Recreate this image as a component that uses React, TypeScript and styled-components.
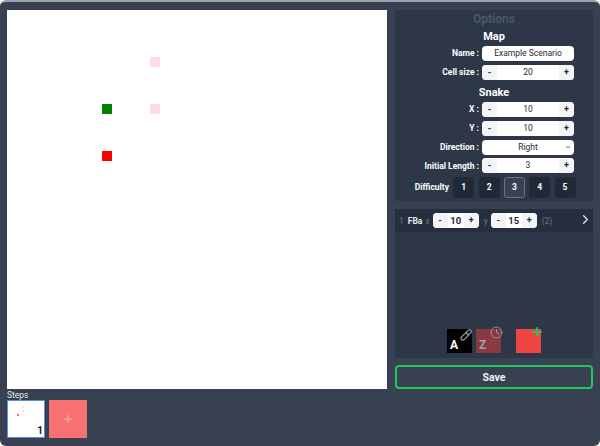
import styled, { createGlobalStyle } from 'styled-components';
import { ChevronRight, Clock, Plus } from 'lucide-react';

const cells = [
  { x: 143, y: 47, color: '#fddde2' },
  { x: 95, y: 94, color: 'green' },
  { x: 143, y: 94, color: '#fddde2' },
  { x: 95, y: 141, color: 'red' },
];

const Global = createGlobalStyle`
  html, body { margin: 0; padding: 0; background: #fff; }
  * { box-sizing: border-box; }
  body { font-family: Roboto, "Open Sans", sans-serif; }
`;

const Frame = styled.div`
  width: 600px;
  height: 446px;
  background: #374151;
  border-top: 2px solid #9ca3af;
  border-radius: 6px;
  padding: 8px 7px 0 7px;
  display: flex;
  flex-direction: column;
  overflow: hidden;
`;

const Main = styled.div`
  display: flex;
  gap: 8px;
  height: 379px;
`;

const Canvas = styled.div`
  position: relative;
  width: 380px;
  height: 379px;
  background: #fff;
`;

const Cell = styled.div`
  position: absolute;
  width: 10px;
  height: 10px;
`;

const Side = styled.div`
  width: 198px;
  display: flex;
  flex-direction: column;
`;

const Options = styled.div`
  height: 191px;
  background: #2d3748;
  display: flex;
  flex-direction: column;
  align-items: center;
  padding-top: 1px;
`;

const Title = styled.div`
  color: #4a5568;
  font-size: 12px;
  font-weight: 700;
  line-height: 17px;
`;

const Section = styled.div<{ $top: number }>`
  color: #fff;
  font-size: 11px;
  font-weight: 700;
  line-height: 15px;
  height: 15px;
  margin-top: ${(p) => p.$top}px;
`;

const Row = styled.div`
  width: 100%;
  height: 18.9px;
  display: flex;
  align-items: center;
  justify-content: flex-end;
  gap: 3px;
  padding-right: 19px;
`;

const Rows = styled.div`
  width: 100%;
  display: flex;
  flex-direction: column;
`;

const Label = styled.label`
  color: #fff;
  font-size: 8.5px;
  font-weight: 700;
  white-space: nowrap;
`;

const TextBox = styled.div`
  width: 92px;
  height: 15px;
  background: #fff;
  border-radius: 4px;
  color: #1f2937;
  font-size: 8.5px;
  line-height: 15px;
  text-align: center;
`;

const Stepper = styled.div<{ $w: number; $bold?: boolean }>`
  width: ${(p) => p.$w}px;
  height: 15px;
  background: #fff;
  border-radius: 4px;
  display: flex;
  overflow: hidden;
  color: #1f2937;
  font-size: ${(p) => (p.$bold ? 9.5 : 8.5)}px;
  font-weight: ${(p) => (p.$bold ? 700 : 400)};
  line-height: 15px;
`;

const StepBtn = styled.span`
  width: 15px;
  background: #f3f4f6;
  text-align: center;
  font-weight: 700;
  font-size: 9px;
`;

const StepValue = styled.span`
  flex: 1;
  text-align: center;
`;

const SelectBox = styled(TextBox)`
  position: relative;
`;

const Caret = styled.svg`
  position: absolute;
  right: 3px;
  top: 5px;
  width: 6px;
  height: 4px;
`;

const DiffRow = styled.div`
  width: 100%;
  height: 22px;
  margin-top: 1px;
  display: flex;
  align-items: center;
  justify-content: flex-end;
  gap: 4.3px;
  padding-right: 17.5px;
`;

const DiffBtn = styled.div<{ $active?: boolean }>`
  width: 21px;
  height: 21px;
  border-radius: 3px;
  background: ${(p) => (p.$active ? '#374151' : '#1f2937')};
  border: 1px solid ${(p) => (p.$active ? '#6b7280' : '#1f2937')};
  color: #fff;
  font-size: 8.5px;
  font-weight: 700;
  display: flex;
  align-items: center;
  justify-content: center;
`;

const Layers = styled.div`
  margin-top: 8px;
  height: 149px;
  background: #2d3748;
  display: flex;
  flex-direction: column;
`;

const LayerRow = styled.div`
  height: 23px;
  background: #262f3f;
  display: flex;
  align-items: center;
  padding-left: 4px;
  font-size: 8.5px;
  color: #6b7280;
  position: relative;
`;

const LayerName = styled.span`
  color: #e5e7eb;
  font-weight: 700;
  margin: 0 3px 0 4px;
`;

const Axis = styled.span<{ $ml?: number }>`
  margin-left: ${(p) => p.$ml || 0}px;
  margin-right: 3px;
  color: #6b7280;
`;

const Count = styled.span`
  margin-left: 5px;
  color: #6b7280;
`;

const Arrow = styled(ChevronRight)`
  position: absolute;
  right: 0;
  top: 3px;
  color: #e5e7eb;
`;

const Swatches = styled.div`
  margin-top: auto;
  margin-bottom: 5px;
  display: flex;
  padding-left: 52px;
`;

const Swatch = styled.div<{ $bg: string; $fg?: string; $mr: number }>`
  position: relative;
  width: 25px;
  height: 24px;
  background: ${(p) => p.$bg};
  color: ${(p) => p.$fg || '#fff'};
  margin-right: ${(p) => p.$mr}px;
  font-size: 12px;
  font-weight: 700;
  display: flex;
  align-items: flex-end;
  padding: 0 0 1px 3px;
  line-height: 13px;
`;

const Badge = styled.span<{ $top: number; $right: number }>`
  position: absolute;
  top: ${(p) => p.$top}px;
  right: ${(p) => p.$right}px;
  display: flex;
`;

const SaveBtn = styled.button`
  margin-top: 7px;
  height: 24px;
  background: transparent;
  border: 2px solid #22c55e;
  border-radius: 4px;
  color: #f3f4f6;
  font-family: inherit;
  font-size: 10.5px;
  font-weight: 700;
  padding: 1px 0 0;
`;

const StepsTitle = styled.div`
  color: #e5e7eb;
  font-size: 8.5px;
  line-height: 10px;
  margin-top: 1px;
`;

const Steps = styled.div`
  display: flex;
  gap: 4px;
`;

const Thumb = styled.div`
  position: relative;
  width: 38px;
  height: 38px;
  background: #fff;
  border: 1px solid #5b8def;
`;

const Dot = styled.div`
  position: absolute;
  width: 2px;
  height: 2px;
`;

const ThumbNum = styled.span`
  position: absolute;
  right: 1px;
  bottom: 0;
  color: #111827;
  font-size: 10px;
  font-weight: 700;
  line-height: 12px;
`;

const AddStep = styled.div`
  width: 38px;
  height: 38px;
  background: #f87171;
  color: #fecaca;
  display: flex;
  align-items: center;
  justify-content: center;
`;

function NumberInput({ value, w = 92, bold }: { value: number; w?: number; bold?: boolean }) {
  return (
    <Stepper $w={w} $bold={bold}>
      <StepBtn>-</StepBtn>
      <StepValue>{value}</StepValue>
      <StepBtn>+</StepBtn>
    </Stepper>
  );
}

export default function App() {
  return (
    <Frame>
      <Global />
      <Main>
        <Canvas>
          {cells.map((c, i) => (
            <Cell key={i} style={{ left: c.x, top: c.y, background: c.color }} />
          ))}
        </Canvas>
        <Side>
          <Options>
            <Title>Options</Title>
            <Section $top={1}>Map</Section>
            <Rows>
              <Row>
                <Label>Name :</Label>
                <TextBox>Example Scenario</TextBox>
              </Row>
              <Row>
                <Label>Cell size :</Label>
                <NumberInput value={20} />
              </Row>
            </Rows>
            <Section $top={3}>Snake</Section>
            <Rows>
              <Row>
                <Label>X :</Label>
                <NumberInput value={10} />
              </Row>
              <Row>
                <Label>Y :</Label>
                <NumberInput value={10} />
              </Row>
              <Row>
                <Label>Direction :</Label>
                <SelectBox>
                  Right
                  <Caret viewBox="0 0 8 5">
                    <path d="M1 1l3 3 3-3" fill="none" stroke="#6b7280" strokeWidth="1.3" />
                  </Caret>
                </SelectBox>
              </Row>
              <Row>
                <Label>Initial Length :</Label>
                <NumberInput value={3} />
              </Row>
            </Rows>
            <DiffRow>
              <Label>Difficulty</Label>
              {[1, 2, 3, 4, 5].map((n) => (
                <DiffBtn key={n} $active={n === 3}>
                  {n}
                </DiffBtn>
              ))}
            </DiffRow>
          </Options>
          <Layers>
            <LayerRow>
              1<LayerName>FBa</LayerName>
              <Axis>x</Axis>
              <NumberInput value={10} w={46} bold />
              <Axis $ml={5}>y</Axis>
              <NumberInput value={15} w={46} bold />
              <Count>(2)</Count>
              <Arrow size={15} strokeWidth={2} />
            </LayerRow>
            <Swatches>
              <Swatch $bg="#000" $mr={4}>
                A
                <Badge $top={-1} $right={-1}>
                  <svg width="13" height="13" viewBox="0 0 13 13" fill="none" stroke="#9ca3af" strokeWidth="1.2">
                    <path d="M1.5 11.5c-1-1-.5-2 .3-2.8l5.6-5.6c1-1 2.6-2 3.6-1s0 2.6-1 3.6L4.4 11.3c-.8.8-1.9 1.2-2.9.2z" />
                    <path d="M6 4.6l2.4 2.4" />
                  </svg>
                </Badge>
              </Swatch>
              <Swatch $bg="#8c3a42" $fg="#9ca3af" $mr={15}>
                Z
                <Badge $top={-3} $right={-2}>
                  <Clock size={13} color="#9ca3af" strokeWidth={1.6} />
                </Badge>
              </Swatch>
              <Swatch $bg="#ef4444" $mr={0}>
                <Badge $top={-4} $right={-3}>
                  <Plus size={14} color="#22c55e" strokeWidth={3.2} />
                </Badge>
              </Swatch>
            </Swatches>
          </Layers>
          <SaveBtn>Save</SaveBtn>
        </Side>
      </Main>
      <StepsTitle>Steps</StepsTitle>
      <Steps>
        <Thumb>
          <Dot style={{ left: 14, top: 5, background: '#fddde2' }} />
          <Dot style={{ left: 14, top: 9, background: '#fddde2' }} />
          <Dot style={{ left: 9, top: 13, background: '#f87171' }} />
          <ThumbNum>1</ThumbNum>
        </Thumb>
        <AddStep>
          <Plus size={12} strokeWidth={1.5} />
        </AddStep>
      </Steps>
    </Frame>
  );
}
